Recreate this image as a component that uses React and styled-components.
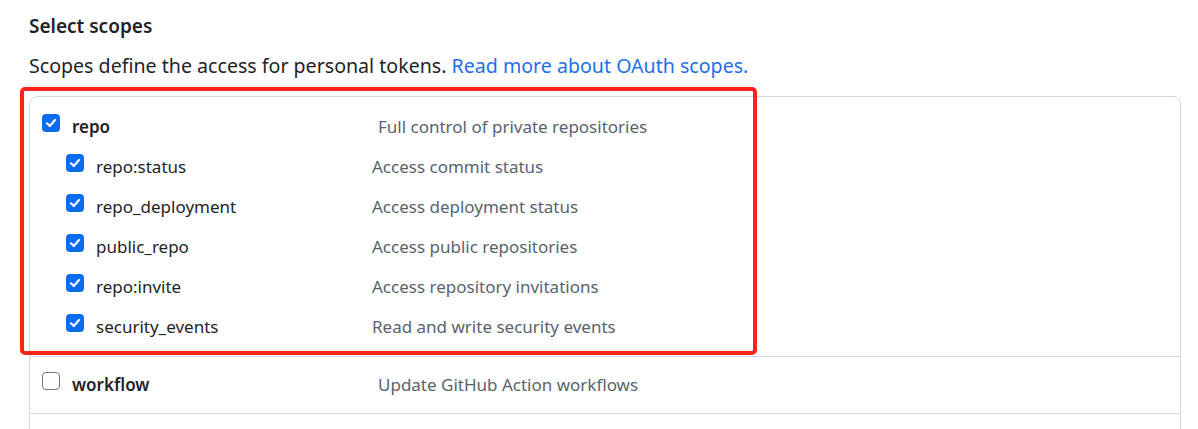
import React from "react";
import styled, { createGlobalStyle } from "styled-components";

const Global = createGlobalStyle`
  html, body { margin: 0; padding: 0; background: #ffffff; }
  body { font-family: "Noto Sans", "Open Sans", sans-serif; color: #1f2328; }
`;

const Page = styled.div`
  position: relative;
  padding: 11px 17px 0 29px;
`;

const Heading = styled.h3`
  margin: 0;
  font-size: 19px;
  font-weight: 600;
  line-height: 30px;
  color: #1f2328;
`;

const Note = styled.p`
  margin: 10px 0 15px 0;
  font-size: 19.6px;
  line-height: 30px;
  color: #1f2328;
`;

const Link = styled.a`
  color: #1f6feb;
  text-decoration: none;
`;

const Box = styled.div`
  border: 1px solid #d1d9e0;
  border-radius: 8px;
  height: 420px;
`;

const Group = styled.div`
  padding: ${(p) => (p.$compact ? "7px 0 9px 0" : "9px 0 10px 0")};
  border-bottom: 1px solid #d1d9e0;
`;

const Row = styled.div`
  display: flex;
  align-items: center;
  height: 40px;
  padding-left: ${(p) => (p.$child ? 36 : 12)}px;
`;

const Label = styled.label`
  display: flex;
  align-items: center;
  gap: 12px;
  width: ${(p) => (p.$child ? 306 : 336)}px;
  font-size: 17px;
  font-weight: ${(p) => (p.$child ? 400 : 600)};
  color: #1f2328;
`;

const Box18 = styled.span`
  display: inline-flex;
  align-items: center;
  justify-content: center;
  box-sizing: border-box;
  width: 18px;
  height: 18px;
  border-radius: 4px;
  margin-top: -7px;
  background: ${(p) => (p.$checked ? "#0b6cf1" : "#ffffff")};
  border: ${(p) => (p.$checked ? "none" : "1.5px solid #767676")};
`;

const Desc = styled.span`
  font-size: 17px;
  color: #59636e;
`;

const Highlight = styled.div`
  position: absolute;
  left: 20px;
  top: 87px;
  width: 737px;
  height: 268px;
  box-sizing: border-box;
  border: 4px solid #ff2218;
  border-radius: 5px;
  pointer-events: none;
`;

const Check = ({ checked }) => (
  <Box18 $checked={checked}>
    {checked && (
      <svg width="12" height="12" viewBox="0 0 12 12">
        <path d="M2 6.3 L4.8 9 L10 3" fill="none" stroke="#fff" strokeWidth="2.2" strokeLinecap="round" strokeLinejoin="round" />
      </svg>
    )}
  </Box18>
);

const children = [
  ["repo:status", "Access commit status"],
  ["repo_deployment", "Access deployment status"],
  ["public_repo", "Access public repositories"],
  ["repo:invite", "Access repository invitations"],
  ["security_events", "Read and write security events"],
];

export default function App() {
  return (
    <>
      <Global />
      <Page>
        <Heading>Select scopes</Heading>
        <Note>
          Scopes define the access for personal tokens.{" "}
          <Link href="#">Read more about OAuth scopes.</Link>
        </Note>
        <Box>
          <Group>
            <Row>
              <Label>
                <Check checked />
                repo
              </Label>
              <Desc>Full control of private repositories</Desc>
            </Row>
            {children.map(([n, d]) => (
              <Row key={n} $child>
                <Label $child>
                  <Check checked />
                  {n}
                </Label>
                <Desc>{d}</Desc>
              </Row>
            ))}
          </Group>
          <Group $compact>
            <Row>
              <Label>
                <Check />
                workflow
              </Label>
              <Desc>Update GitHub Action workflows</Desc>
            </Row>
          </Group>
        </Box>
        <Highlight />
      </Page>
    </>
  );
}
